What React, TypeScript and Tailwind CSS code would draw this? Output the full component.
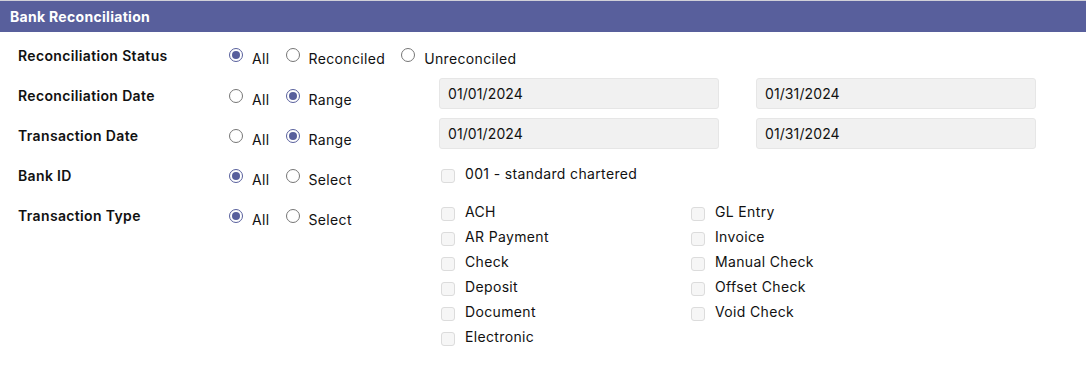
import React from "react";

function Radio({ checked, label }: { checked?: boolean; label: string }) {
  return (
    <div className="flex items-start">
      <span
        className={
          "mt-[1px] flex h-[14px] w-[14px] shrink-0 items-center justify-center rounded-full border bg-white " +
          (checked ? "border-[#585f9c]" : "border-[#767676]")
        }
      >
        {checked && <span className="h-[8px] w-[8px] rounded-full bg-[#585f9c]" />}
      </span>
      <span className="ml-[9px] mt-[4px] text-[14px] leading-[16px] tracking-[0.35px] text-[#111]">{label}</span>
    </div>
  );
}

function Check({ label }: { label: string }) {
  return (
    <div className="flex h-[25px] items-start">
      <span className="mt-[3px] h-[14px] w-[14px] shrink-0 rounded-[3px] border border-[#dcdcdc] bg-[#f6f6f6]" />
      <span className="ml-[10px] text-[14px] leading-[16px] tracking-[0.35px] text-[#111]">{label}</span>
    </div>
  );
}

function DateBox({ value }: { value: string }) {
  return (
    <div className="flex h-[31px] w-[280px] items-center rounded-[3px] border border-[#e6e6e6] bg-[#f1f1f1] pl-[8px] text-[14px] tracking-[0.1px] text-[#111]">
      {value}
    </div>
  );
}

function Label({ children }: { children: React.ReactNode }) {
  return (
    <div className="w-[211px] shrink-0 pt-[10px] text-[14px] font-semibold leading-[20px] tracking-[0.35px] text-[#111]">
      {children}
    </div>
  );
}

export default function App() {
  return (
    <div
      className="h-[370px] w-[1086px] bg-white"
      style={{ fontFamily: "Inter, 'Noto Sans', sans-serif" }}
    >
      <div className="flex h-[32px] items-center border-t border-[#d0d0d8] bg-[#585f9c] pl-[10px] text-[14px] font-bold tracking-[0.3px] text-white">
        Bank Reconciliation
      </div>
      <div className="pl-[18px] pt-[4px]">
        {/* Row 1 */}
        <div className="flex h-[40px]">
          <Label>Reconciliation Status</Label>
          <div className="flex gap-[16px] pt-[11px]">
            <Radio checked label="All" />
            <Radio label="Reconciled" />
            <Radio label="Unreconciled" />
          </div>
        </div>
        {/* Row 2 */}
        <div className="flex h-[40px]">
          <Label>Reconciliation Date</Label>
          <div className="flex w-[210px] shrink-0 gap-[16px] pt-[12px]">
            <Radio label="All" />
            <Radio checked label="Range" />
          </div>
          <div className="flex gap-[37px] pt-[2px]">
            <DateBox value="01/01/2024" />
            <DateBox value="01/31/2024" />
          </div>
        </div>
        {/* Row 3 */}
        <div className="flex h-[40px]">
          <Label>Transaction Date</Label>
          <div className="flex w-[210px] shrink-0 gap-[16px] pt-[12px]">
            <Radio label="All" />
            <Radio checked label="Range" />
          </div>
          <div className="flex gap-[37px] pt-[2px]">
            <DateBox value="01/01/2024" />
            <DateBox value="01/31/2024" />
          </div>
        </div>
        {/* Row 4 */}
        <div className="flex h-[40px]">
          <Label>Bank ID</Label>
          <div className="flex w-[210px] shrink-0 gap-[16px] pt-[12px]">
            <Radio checked label="All" />
            <Radio label="Select" />
          </div>
          <div className="pl-[2px] pt-[10px]">
            <Check label="001 - standard chartered" />
          </div>
        </div>
        {/* Row 5 */}
        <div className="flex">
          <Label>Transaction Type</Label>
          <div className="flex w-[210px] shrink-0 gap-[16px] pt-[12px]">
            <Radio checked label="All" />
            <Radio label="Select" />
          </div>
          <div className="flex pl-[2px] pt-[8px]">
            <div className="w-[250px]">
              <Check label="ACH" />
              <Check label="AR Payment" />
              <Check label="Check" />
              <Check label="Deposit" />
              <Check label="Document" />
              <Check label="Electronic" />
            </div>
            <div>
              <Check label="GL Entry" />
              <Check label="Invoice" />
              <Check label="Manual Check" />
              <Check label="Offset Check" />
              <Check label="Void Check" />
            </div>
          </div>
        </div>
      </div>
    </div>
  );
}
